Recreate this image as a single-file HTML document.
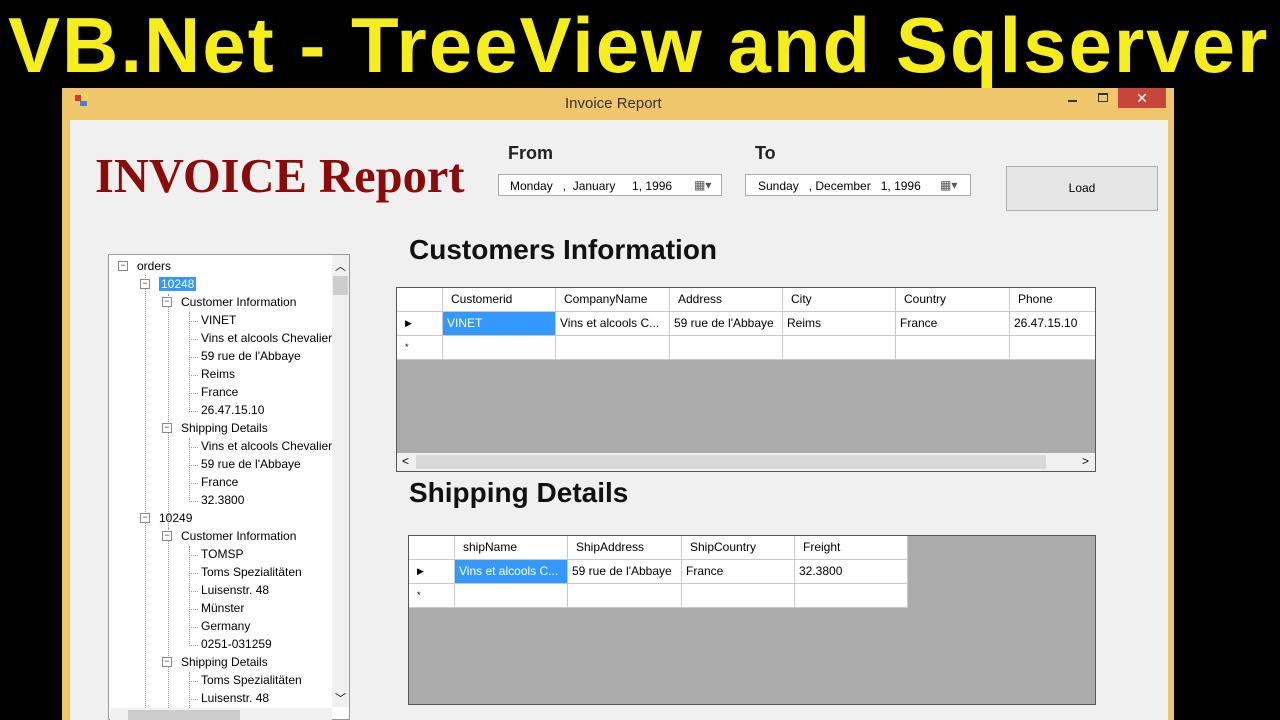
<html><head><style>
body{margin:0;width:1280px;height:720px;background:#000;position:relative;overflow:hidden;font-family:"Liberation Sans",sans-serif}
.a{position:absolute}
.t{font-size:12px;color:#000;white-space:nowrap}
.tree div{position:absolute;font-size:12px;white-space:nowrap}
.box{position:absolute;width:8px;height:8px;border:1px solid #888;background:#fff;font-size:9px;line-height:7px;text-align:center;color:#333}
.cell{position:absolute;border-right:1px solid #c8c8c8;border-bottom:1px solid #c8c8c8;box-sizing:border-box;font-size:12px;padding:4px 0 0 6px;white-space:nowrap;overflow:hidden;background:#fff}
</style></head><body>
<div class="a" style="left:0;top:0;width:1280px;height:88px;background:#000"></div>
<div class="a" style="left:8px;top:1px;font-size:78px;letter-spacing:2px;font-weight:bold;color:#f6ee1c;white-space:nowrap;line-height:88px">VB.Net - TreeView and Sqlserver</div>
<div class="a" style="left:62px;top:88px;width:1112px;height:632px;background:#f0c66c"></div>
<div class="a" style="left:75px;top:95px;width:6px;height:6px;background:#d33"></div><div class="a" style="left:81px;top:93px;width:7px;height:7px;background:#f3d54a"></div><div class="a" style="left:80px;top:101px;width:7px;height:5px;background:#4a7fd0"></div>
<div class="a t" style="left:565px;top:95px;font-size:15px;color:#333">Invoice Report</div>
<div class="a" style="left:1068px;top:100px;width:9px;height:2px;background:#333"></div>
<div class="a" style="left:1098px;top:93px;width:8px;height:6px;border:1px solid #333;border-top-width:2px"></div>
<div class="a" style="left:1118px;top:88px;width:48px;height:20px;background:#c7453a;color:#fff;text-align:center;font-size:14px;line-height:20px">✕</div>
<div class="a" style="left:70px;top:120px;width:1098px;height:600px;background:#f0f0f0"></div>
<div class="a" style="left:95px;top:149px;font-family:'Liberation Serif',serif;font-weight:bold;font-size:48.5px;color:#8b0b0b;white-space:nowrap">INVOICE Report</div>
<div class="a" style="left:508px;top:143px;font-size:18px;font-weight:bold;color:#222">From</div>
<div class="a" style="left:755px;top:143px;font-size:18px;font-weight:bold;color:#222">To</div>
<div class="a t" style="left:498px;top:174px;width:224px;height:22px;background:#fff;border:1px solid #aaa;box-sizing:border-box;padding:4px 0 0 11px">Monday &nbsp;&nbsp;, &nbsp;January &nbsp;&nbsp;&nbsp;&nbsp;1, 1996</div>
<div class="a t" style="left:694px;top:178px;font-size:12px;color:#555">▦▾</div>
<div class="a t" style="left:745px;top:174px;width:226px;height:22px;background:#fff;border:1px solid #aaa;box-sizing:border-box;padding:4px 0 0 12px">Sunday &nbsp;&nbsp;, December &nbsp;&nbsp;1, 1996</div>
<div class="a t" style="left:940px;top:178px;font-size:12px;color:#555">▦▾</div>
<div class="a t" style="left:1006px;top:166px;width:152px;height:45px;background:#e6e6e6;border:1px solid #adadad;box-sizing:border-box;text-align:center;line-height:43px">Load</div>
<div class="a" style="left:409px;top:234px;font-size:28px;font-weight:bold;color:#111">Customers Information</div>
<div class="a" style="left:409px;top:477px;font-size:28px;font-weight:bold;color:#111">Shipping Details</div>
<div class="a" style="left:108px;top:254px;width:242px;height:466px;background:#fff;border:1px solid #999;box-sizing:border-box"></div>
<div class="a" style="left:110px;top:708px;width:222px;height:12px;background:#f0f0f0"></div>
<div class="a" style="left:128px;top:710px;width:112px;height:10px;background:#cdcdcd"></div>
<div class="a" style="left:396px;top:287px;width:700px;height:185px;background:#ababab;border:1px solid #555;box-sizing:border-box"></div>
<div class="a" style="left:408px;top:535px;width:688px;height:170px;background:#ababab;border:1px solid #555;box-sizing:border-box"></div>
<div id="g"></div>
<div class="a" style="left:397px;top:453px;width:698px;height:18px;background:#f0f0f0"></div>
<div class="a" style="left:416px;top:455px;width:630px;height:14px;background:#d8d8d8"></div>
<div class="a t" style="left:402px;top:454px">&lt;</div><div class="a t" style="left:1082px;top:454px">&gt;</div>
<script>
var T=[[0,"orders"],[1,"10248",1],[2,"Customer Information"],[3,"VINET"],[3,"Vins et alcools Chevalier"],[3,"59 rue de l'Abbaye"],[3,"Reims"],[3,"France"],[3,"26.47.15.10"],[2,"Shipping Details"],[3,"Vins et alcools Chevalier"],[3,"59 rue de l'Abbaye"],[3,"France"],[3,"32.3800"],[1,"10249"],[2,"Customer Information"],[3,"TOMSP"],[3,"Toms Spezialitäten"],[3,"Luisenstr. 48"],[3,"Münster"],[3,"Germany"],[3,"0251-031259"],[2,"Shipping Details"],[3,"Toms Spezialitäten"],[3,"Luisenstr. 48"]];
var h="";
h+='<div class="a" style="left:145px;top:275px;height:433px;border-left:1px dotted #999"></div>';
[[168,294,360],[168,528,180]].forEach(function(v){h+='<div class="a" style="left:'+v[0]+'px;top:'+v[1]+'px;height:'+v[2]+'px;border-left:1px dotted #999"></div>';});
[[189,312,100],[189,438,64],[189,546,100],[189,672,36]].forEach(function(v){h+='<div class="a" style="left:'+v[0]+'px;top:'+v[1]+'px;height:'+v[2]+'px;border-left:1px dotted #999"></div>';});
T.forEach(function(r,i){var y=258+i*18,x=[118,140,162,186][r[0]];
if(r[0]<3)h+='<div class="box" style="left:'+x+'px;top:'+(y+3)+'px">−</div>';
else h+='<div class="a" style="left:'+(x+3)+'px;top:'+(y+9)+'px;width:9px;border-top:1px dotted #999"></div>';
var tx=r[0]<3?x+19:x+15;
h+='<div class="a t" style="left:'+tx+'px;top:'+(y+1)+'px;'+(r[2]?'background:#3399ff;color:#fff;padding:0 2px;':'')+'">'+r[1]+'</div>';});
h+='<div class="a" style="left:332px;top:255px;width:17px;height:452px;background:#f0f0f0"></div><div class="a" style="left:333px;top:276px;width:15px;height:19px;background:#cdcdcd"></div><div class="a t" style="left:335px;top:258px;font-size:11px">︿</div><div class="a t" style="left:335px;top:690px;font-size:11px">﹀</div>';
function grid(x0,y0,cols,rows,wmax){var s='<div class="a" style="left:'+x0+'px;top:'+y0+'px;width:'+wmax+'px;height:72px;overflow:hidden">',xs=[0,46];for(var i=0;i<cols.length;i++)xs.push(xs[xs.length-1]+113.3);
for(var r=0;r<3;r++){var y=r*24;
s+='<div class="cell" style="left:0;top:'+y+'px;width:46px;height:24px;font-size:9px;padding:6px 0 0 8px">'+(r==1?'▶':r==2?'*':'')+'</div>';
for(var c=0;c<cols.length;c++){var t=r==0?cols[c]:r==1?rows[c]:"";var sel=r==1&&c==0;
s+='<div class="cell" style="left:'+Math.round(xs[c+1])+'px;top:'+y+'px;width:'+(Math.round(xs[c+2])-Math.round(xs[c+1]))+'px;height:24px;padding-left:'+(r==0?8:4)+'px;'+(sel?'background:#3399ff;color:#fff;':'')+'">'+t+'</div>';}}
return s+'</div>';}
h+=grid(397,288,["Customerid","CompanyName","Address","City","Country","Phone"],["VINET","Vins et alcools C...","59 rue de l'Abbaye","Reims","France","26.47.15.10"],698);
h+=grid(409,536,["shipName","ShipAddress","ShipCountry","Freight"],["Vins et alcools C...","59 rue de l'Abbaye","France","32.3800"],686);
document.getElementById("g").innerHTML=h;
</script>
</body></html>
